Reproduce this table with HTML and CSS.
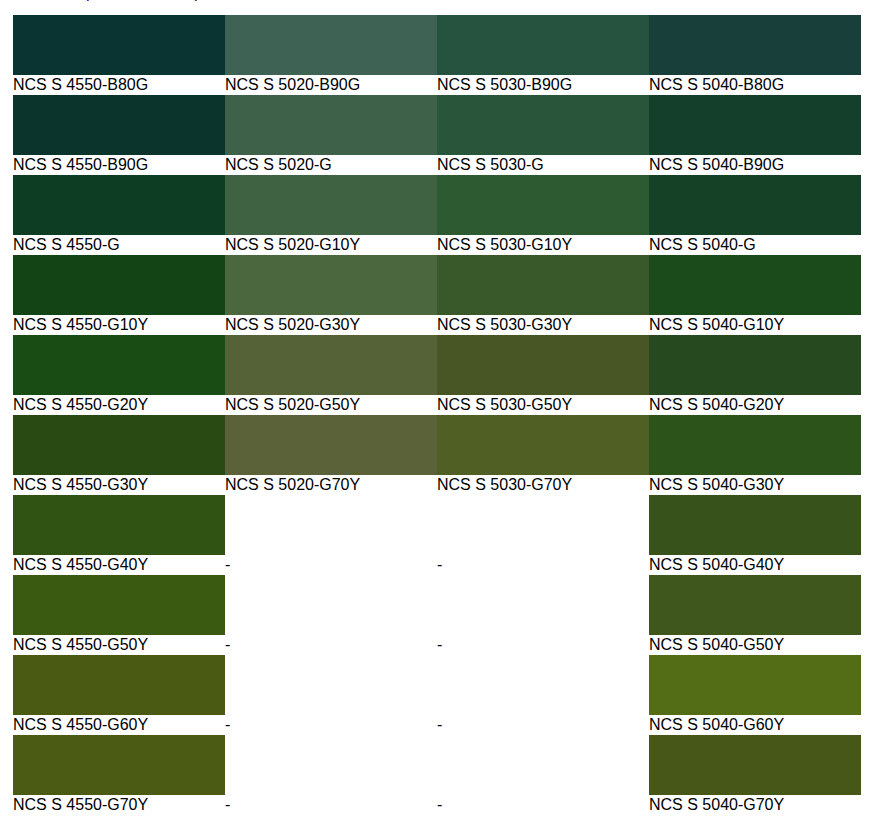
FILE: index.html
```html
<!DOCTYPE html>
<html lang="en">
<head>
<meta charset="utf-8">
<title>NCS shades</title>
<link rel="stylesheet" href="styles.css">
</head>
<body>
<p class="intro"><span class="w1">Related</span><a class="link" href="#">p</a><span class="w2">ages</span><span class="w3">p</span></p>
<div class="grid">
  <div class="cell"><div class="sw" style="background:#0a3432"></div><div class="lbl">NCS S 4550-B80G</div></div>
  <div class="cell"><div class="sw" style="background:#3e6253"></div><div class="lbl">NCS S 5020-B90G</div></div>
  <div class="cell"><div class="sw" style="background:#265340"></div><div class="lbl">NCS S 5030-B90G</div></div>
  <div class="cell"><div class="sw" style="background:#183f3a"></div><div class="lbl">NCS S 5040-B80G</div></div>

  <div class="cell"><div class="sw" style="background:#0b352c"></div><div class="lbl">NCS S 4550-B90G</div></div>
  <div class="cell"><div class="sw" style="background:#3e6149"></div><div class="lbl">NCS S 5020-G</div></div>
  <div class="cell"><div class="sw" style="background:#29553a"></div><div class="lbl">NCS S 5030-G</div></div>
  <div class="cell"><div class="sw" style="background:#143f2a"></div><div class="lbl">NCS S 5040-B90G</div></div>

  <div class="cell"><div class="sw" style="background:#0d3d22"></div><div class="lbl">NCS S 4550-G</div></div>
  <div class="cell"><div class="sw" style="background:#3f6243"></div><div class="lbl">NCS S 5020-G10Y</div></div>
  <div class="cell"><div class="sw" style="background:#2d5a30"></div><div class="lbl">NCS S 5030-G10Y</div></div>
  <div class="cell"><div class="sw" style="background:#154126"></div><div class="lbl">NCS S 5040-G</div></div>

  <div class="cell"><div class="sw" style="background:#134416"></div><div class="lbl">NCS S 4550-G10Y</div></div>
  <div class="cell"><div class="sw" style="background:#4a673d"></div><div class="lbl">NCS S 5020-G30Y</div></div>
  <div class="cell"><div class="sw" style="background:#39592a"></div><div class="lbl">NCS S 5030-G30Y</div></div>
  <div class="cell"><div class="sw" style="background:#1b4a1b"></div><div class="lbl">NCS S 5040-G10Y</div></div>

  <div class="cell"><div class="sw" style="background:#194b14"></div><div class="lbl">NCS S 4550-G20Y</div></div>
  <div class="cell"><div class="sw" style="background:#556136"></div><div class="lbl">NCS S 5020-G50Y</div></div>
  <div class="cell"><div class="sw" style="background:#485626"></div><div class="lbl">NCS S 5030-G50Y</div></div>
  <div class="cell"><div class="sw" style="background:#27491f"></div><div class="lbl">NCS S 5040-G20Y</div></div>

  <div class="cell"><div class="sw" style="background:#2a4a13"></div><div class="lbl">NCS S 4550-G30Y</div></div>
  <div class="cell"><div class="sw" style="background:#5b6239"></div><div class="lbl">NCS S 5020-G70Y</div></div>
  <div class="cell"><div class="sw" style="background:#506025"></div><div class="lbl">NCS S 5030-G70Y</div></div>
  <div class="cell"><div class="sw" style="background:#2b531a"></div><div class="lbl">NCS S 5040-G30Y</div></div>

  <div class="cell"><div class="sw" style="background:#305314"></div><div class="lbl">NCS S 4550-G40Y</div></div>
  <div class="cell"><div class="sw"></div><div class="lbl">-</div></div>
  <div class="cell"><div class="sw"></div><div class="lbl">-</div></div>
  <div class="cell"><div class="sw" style="background:#37521a"></div><div class="lbl">NCS S 5040-G40Y</div></div>

  <div class="cell"><div class="sw" style="background:#3a5a12"></div><div class="lbl">NCS S 4550-G50Y</div></div>
  <div class="cell"><div class="sw"></div><div class="lbl">-</div></div>
  <div class="cell"><div class="sw"></div><div class="lbl">-</div></div>
  <div class="cell"><div class="sw" style="background:#3f571c"></div><div class="lbl">NCS S 5040-G50Y</div></div>

  <div class="cell"><div class="sw" style="background:#4a5a13"></div><div class="lbl">NCS S 4550-G60Y</div></div>
  <div class="cell"><div class="sw"></div><div class="lbl">-</div></div>
  <div class="cell"><div class="sw"></div><div class="lbl">-</div></div>
  <div class="cell"><div class="sw" style="background:#536c16"></div><div class="lbl">NCS S 5040-G60Y</div></div>

  <div class="cell"><div class="sw" style="background:#4c5b14"></div><div class="lbl">NCS S 4550-G70Y</div></div>
  <div class="cell"><div class="sw"></div><div class="lbl">-</div></div>
  <div class="cell"><div class="sw"></div><div class="lbl">-</div></div>
  <div class="cell"><div class="sw" style="background:#465717"></div><div class="lbl">NCS S 5040-G70Y</div></div>
</div>
</body>
</html>
```
FILE: styles.css
```css
html, body {
  margin: 0;
  padding: 0;
  background: #ffffff;
}
body {
  font-family: "Liberation Sans", Arial, sans-serif;
  font-size: 16px;
  color: #000000;
}
.intro {
  margin: -16px 0 13px 0;
  height: 18px;
  line-height: 18px;
  white-space: nowrap;
  color: #ffffff;
}
.intro .w1 {
  display: inline-block;
  width: 86px;
}
.intro .link {
  color: #0b0bb8;
  text-decoration: none;
}
.intro .w2 {
  display: inline-block;
  width: 99px;
}
.intro .w3 {
  color: #111;
}
.grid {
  display: grid;
  grid-template-columns: repeat(4, 212px);
  padding-left: 13px;
}
.cell {
  display: flex;
  flex-direction: column;
}
.sw {
  height: 60px;
}
.lbl {
  height: 20px;
  line-height: 19px;
  white-space: nowrap;
}
```
